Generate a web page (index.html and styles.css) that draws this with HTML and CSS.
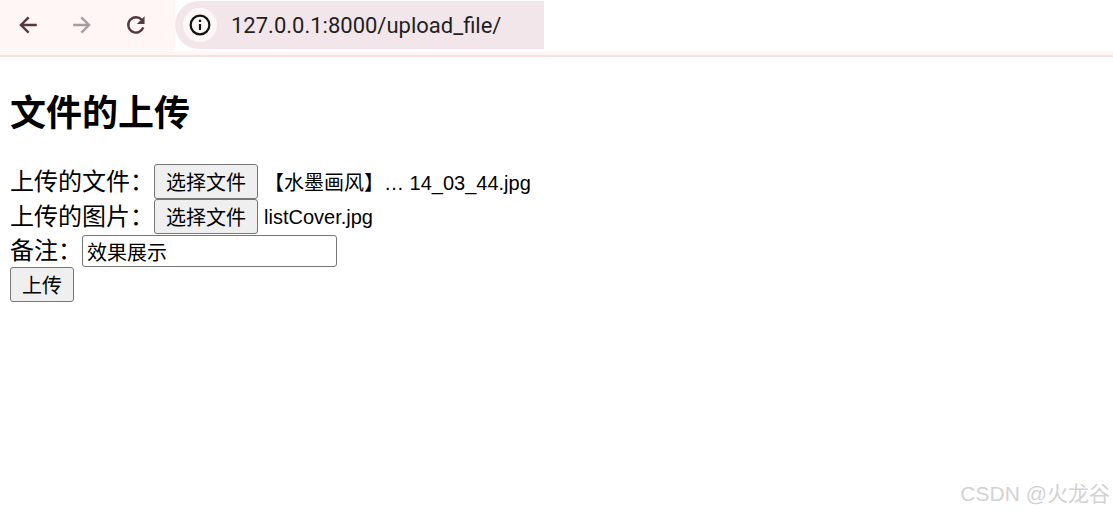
FILE: index.html
```html
<!DOCTYPE html>
<html lang="zh-CN">
<head>
  <meta charset="UTF-8">
  <meta name="viewport" content="width=device-width, initial-scale=1">
  <title>文件的上传</title>
  <link rel="stylesheet" href="styles.css">
</head>
<body>
  <div class="toolbar">
    <div class="nav-buttons">
      <svg class="nav-icon" viewBox="0 0 20 20"><path d="M18 10H4M10.6 3 3.6 10l7 7" fill="none" stroke="#54393d" stroke-width="2.2"/></svg>
      <svg class="nav-icon" viewBox="0 0 20 20"><path d="M2 10h14M9.4 3l7 7-7 7" fill="none" stroke="#ab9d9f" stroke-width="2.2"/></svg>
      <svg class="nav-icon" viewBox="0 0 20 20"><path d="M16.6 12.2A7 7 0 1 1 15.2 5.2" fill="none" stroke="#54393d" stroke-width="2.2"/><path d="M17.8 2v7h-7z" fill="#54393d"/></svg>
    </div>
    <div class="address">
      <span class="site-info">
        <svg class="info-icon" viewBox="0 0 20 20"><circle cx="10" cy="10" r="8.5" fill="none" stroke="#111" stroke-width="2"/><path d="M10 9v5.6M10 5.2v2" stroke="#111" stroke-width="2"/></svg>
      </span>
      <span class="url">127.0.0.1:8000/upload_file/</span>
    </div>
  </div>
  <div class="toolbar-strip"></div>

  <div class="content">
    <h1>文件的上传</h1>
    <form class="upload-form">
      <div class="row">
        <span class="label">上传的文件：</span>
        <button type="button" class="btn">选择文件</button>
        <span class="file-name">【水墨画风】… 14_03_44.jpg</span>
      </div>
      <div class="row">
        <span class="label">上传的图片：</span>
        <button type="button" class="btn">选择文件</button>
        <span class="file-name low">listCover.jpg</span>
      </div>
      <div class="row remark-row">
        <span class="label">备注：</span>
        <input type="text" class="remark" value="效果展示">
      </div>
      <div class="row">
        <button type="button" class="btn">上传</button>
      </div>
    </form>
  </div>

  <div class="watermark">CSDN @火龙谷</div>
</body>
</html>
```

FILE: styles.css
```css
html, body {
  height: 100%;
}
body {
  margin: 0;
  background: #fff;
  color: #000;
  font-family: "Liberation Sans", "Noto Sans CJK SC", sans-serif;
  font-size: 24px;
  overflow: hidden;
  position: relative;
}
.toolbar {
  display: flex;
  height: 49px;
}
.nav-buttons {
  display: flex;
  align-items: center;
  gap: 32px;
  width: 175px;
  height: 50px;
  padding-left: 17px;
  box-sizing: border-box;
  background: #fff6f5;
}
.nav-icon {
  width: 22px;
  height: 22px;
}
.address {
  display: flex;
  align-items: center;
  width: 369px;
  height: 48px;
  margin-top: 1px;
  background: #f3e6ea;
  border-radius: 24px 0 0 24px;
}
.site-info {
  display: flex;
  align-items: center;
  justify-content: center;
  width: 34px;
  height: 34px;
  margin-left: 8px;
  border-radius: 50%;
  background: #fff6f8;
}
.info-icon {
  width: 22px;
  height: 22px;
}
.url {
  margin-left: 14px;
  font-family: "Roboto", "Liberation Sans", sans-serif;
  font-size: 22px;
  color: #1f1f1f;
}
.toolbar-strip {
  height: 4px;
  margin-top: 2px;
  background: #fff6f5;
  border-bottom: 2px solid #f8dfe0;
}
.content {
  padding: 0 10px;
}
h1 {
  margin: 32px 0 25px;
  font-size: 36px;
  line-height: 50px;
  font-weight: bold;
}
.row {
  display: flex;
  align-items: center;
}
.remark-row {
  margin-top: 1px;
}
.label {
  font-size: 24px;
  line-height: 32px;
}
.btn {
  height: 35px;
  padding: 0 11px;
  border: 1px solid #767676;
  border-radius: 3px;
  background: #efefef;
  color: #000;
  font-family: inherit;
  font-size: 20px;
}
.file-name {
  margin-left: 6px;
  font-size: 20px;
}
.file-name.low {
  padding-top: 2px;
}
.remark {
  width: 255px;
  height: 32px;
  box-sizing: border-box;
  margin: 0;
  padding: 0 4px;
  border: 1px solid #767676;
  border-radius: 3px;
  font-family: inherit;
  font-size: 20px;
}
.watermark {
  position: absolute;
  right: 3px;
  bottom: 7px;
  font-size: 21px;
  color: #d2d2d2;
}
```
